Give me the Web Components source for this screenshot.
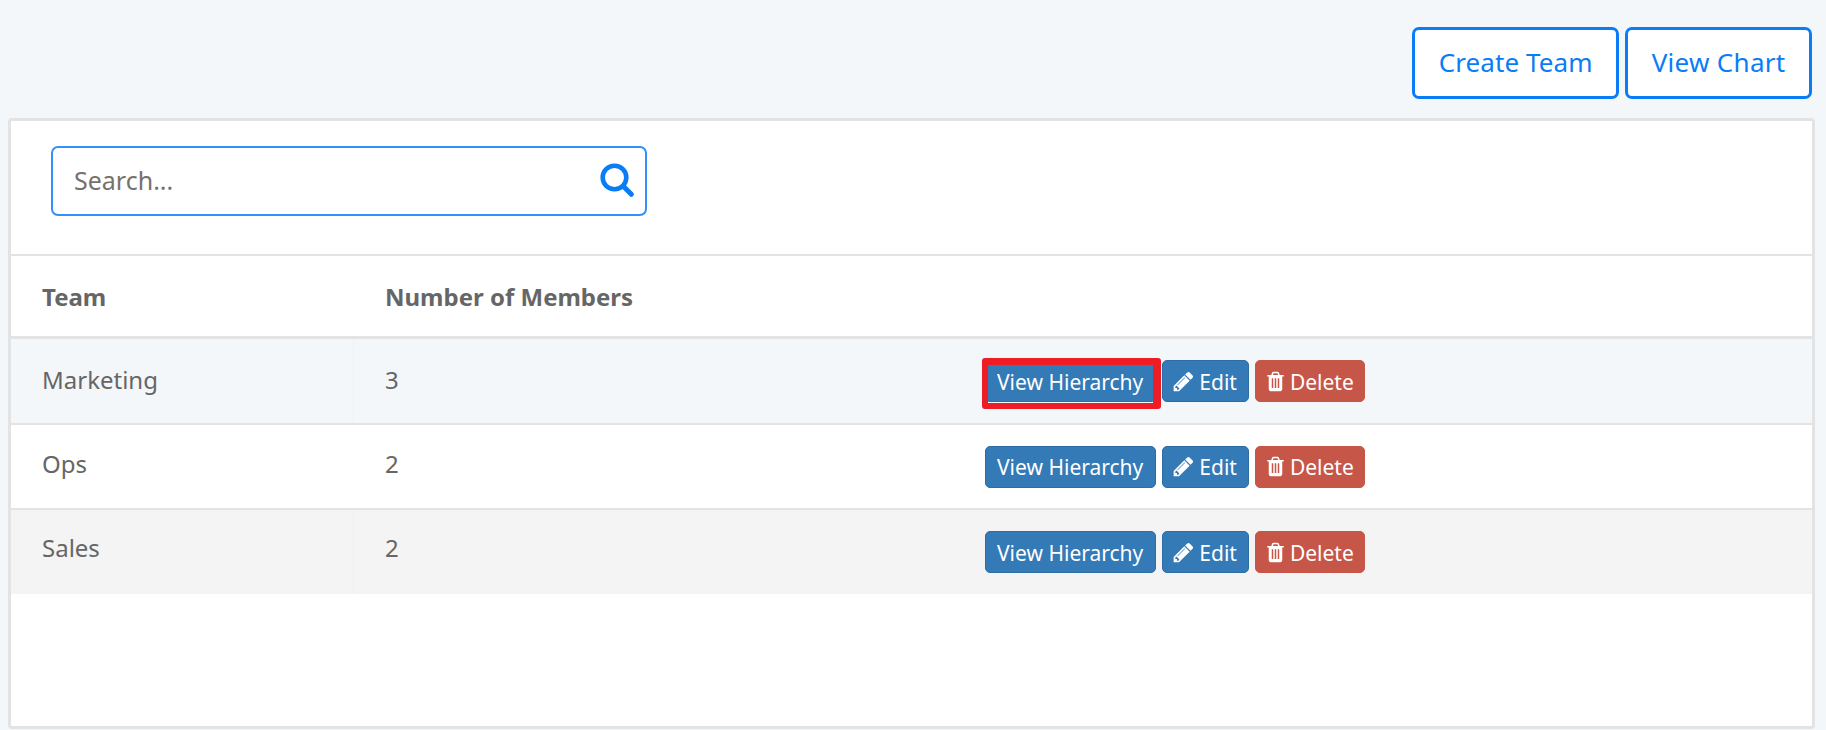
<!DOCTYPE html>
<html lang="en">
<head>
<meta charset="utf-8">
<title>Teams</title>
<style>
  html, body { margin: 0; height: 100%; }
  body { background: #f4f7fa; font-family: "Noto Sans", "Open Sans", sans-serif; color: #666; overflow: hidden; }
</style>
</head>
<body>
<team-page>
  <outline-button slot="actions" style="--track: 0.100px">Create Team</outline-button>
  <outline-button slot="actions" style="--track: 0.300px">View Chart</outline-button>
  <search-box slot="search" placeholder="Search..."></search-box>
  <team-table>
    <team-row team="Marketing" members="3" tone="blue" marked style="--row-height: 86px; --lift: 4px"></team-row>
    <team-row team="Ops" members="2" style="--row-height: 85px; --lift: 7px"></team-row>
    <team-row team="Sales" members="2" tone="grey" style="--row-height: 84px; --lift: 9px"></team-row>
  </team-table>
</team-page>

<script>
'use strict';

const ICONS = {
  pencil: '<svg viewBox="0 0 1792 1792" width="23" height="23" fill="currentColor"><path d="M491 1536l91-91-235-235-91 91v107h128v128h107zm523-928q0-22-22-22-10 0-17 7l-542 542q-7 7-7 17 0 22 22 22 10 0 17-7l542-542q7-7 7-17zm-54-192l416 416-832 832h-416v-416zm683 96q0 53-37 90l-166 166-416-416 166-165q36-38 90-38 53 0 91 38l235 234q37 39 37 91z"/></svg>',
  trash: '<svg viewBox="0 0 1792 1792" width="21" height="23" preserveAspectRatio="none" fill="currentColor"><path d="M704 1376v-704q0-14-9-23t-23-9h-64q-14 0-23 9t-9 23v704q0 14 9 23t23 9h64q14 0 23-9t9-23zm256 0v-704q0-14-9-23t-23-9h-64q-14 0-23 9t-9 23v704q0 14 9 23t23 9h64q14 0 23-9t9-23zm256 0v-704q0-14-9-23t-23-9h-64q-14 0-23 9t-9 23v704q0 14 9 23t23 9h64q14 0 23-9t9-23zm-544-992h448l-48-117q-7-9-17-11h-317q-10 2-17 11zm928 32v64q0 14-9 23t-23 9h-96v948q0 83-47 143.500t-113 60.500h-832q-66 0-113-58.500t-47-141.500v-952h-96q-14 0-23-9t-9-23v-64q0-14 9-23t23-9h309l70-167q15-37 54-63t79-26h320q40 0 79 26t54 63l70 167h309q14 0 23 9t9 23z"/></svg>',
  search: '<svg viewBox="0 0 34 34" width="34" height="34" fill="none" stroke="currentColor"><circle cx="14.500" cy="14.500" r="11.800" stroke-width="4.600"/><path d="M23.500 23.500l7.800 7.800" stroke-width="5" stroke-linecap="round"/></svg>'
};

class TeamPage extends HTMLElement {
  constructor () {
    super();
    this.attachShadow({ mode: 'open' }).innerHTML = `
      <style>
        :host { display: block; height: 730px; padding: 27px 11px 1px 8px; box-sizing: border-box; }
        .actions { display: flex; justify-content: flex-end; gap: 6px; height: 72px; margin-bottom: 19px; margin-right: 3px; }
        .card { height: 611px; box-sizing: border-box; background: #fff; border: 3px solid #e3e3e3; border-radius: 4px; }
        .search { height: 135px; padding: 25px 0 0 40px; box-sizing: border-box; border-bottom: 2px solid #e3e3e3; }
      </style>
      <div class="actions"><slot name="actions"></slot></div>
      <div class="card">
        <div class="search"><slot name="search"></slot></div>
        <slot></slot>
      </div>`;
  }
}

class OutlineButton extends HTMLElement {
  constructor () {
    super();
    this.attachShadow({ mode: 'open' }).innerHTML = `
      <style>
        :host { display: flex; align-items: center; padding: 0 23.500px 2px; background: #fff; border: 3px solid #0a7cf5; border-radius: 7px; color: #0a7cf5; font-size: 26px; letter-spacing: var(--track, 0); }
      </style>
      <slot></slot>`;
  }
}

class SearchBox extends HTMLElement {
  constructor () {
    super();
    this.attachShadow({ mode: 'open' }).innerHTML = `
      <style>
        :host { display: flex; align-items: center; justify-content: space-between; box-sizing: border-box; width: 596px; height: 70px; padding: 0 11px 2px 21px; border: 2px solid #3291f8; border-radius: 7px; }
        .hint { font-size: 25px; color: #76716b; }
        .icon { display: flex; color: #0a7cf5; }
      </style>
      <span class="hint"></span>
      <span class="icon">${ICONS.search}</span>`;
  }

  connectedCallback () {
    this.shadowRoot.querySelector('.hint').textContent = this.getAttribute('placeholder');
  }
}

class TeamTable extends HTMLElement {
  constructor () {
    super();
    this.attachShadow({ mode: 'open' }).innerHTML = `
      <style>
        :host { display: block; }
        .head { display: grid; grid-template-columns: 343px 1fr; align-items: center; height: 83px; box-sizing: border-box; border-bottom: 3px solid #e3e3e3; font-size: 24px; font-weight: 700; color: #666; }
        .head span { padding-left: 31px; }
      </style>
      <div class="head"><span>Team</span><span>Number of Members</span></div>
      <slot></slot>`;
  }
}

class TeamRow extends HTMLElement {
  constructor () {
    super();
    this.attachShadow({ mode: 'open' }).innerHTML = `
      <style>
        :host { display: grid; grid-template-columns: 343px 631px 1fr; align-items: stretch; height: var(--row-height); box-sizing: border-box; border-bottom: 2px solid #e3e3e3; font-size: 24px; color: #666; }
        :host([tone="blue"]) { background: #f4f7fa; }
        :host([tone="grey"]) { background: #f4f4f4; border-bottom: 0; }
        .cell { display: flex; align-items: center; padding-left: 31px; padding-bottom: var(--lift); }
        .team { border-right: 1px solid transparent; }
        :host([tone="blue"]) .team { border-right-color: #f0f3f6; }
        :host([tone="grey"]) .team { border-right-color: #f0f0f0; }
        .actions { display: flex; align-items: center; gap: 6px; position: relative; }
        .mark { position: absolute; left: -3px; top: 19px; width: 179px; height: 51px; box-sizing: border-box; border-style: solid; border-color: #ee1c25; border-width: 7px 8px 6px 6px; border-radius: 3px; }
      </style>
      <div class="cell team"></div>
      <div class="cell members"></div>
      <div class="actions">
        <action-button>View Hierarchy</action-button>
        <action-button icon="pencil">Edit</action-button>
        <action-button icon="trash" tone="danger">Delete</action-button>
      </div>`;
  }

  connectedCallback () {
    this.shadowRoot.querySelector('.team').textContent = this.getAttribute('team');
    this.shadowRoot.querySelector('.members').textContent = this.getAttribute('members');

    if (this.hasAttribute('marked')) {
      const $$mark = document.createElement('div');
      $$mark.className = 'mark';
      this.shadowRoot.querySelector('.actions').appendChild($$mark);
    }
  }
}

class ActionButton extends HTMLElement {
  constructor () {
    super();
    this.attachShadow({ mode: 'open' }).innerHTML = `
      <style>
        :host { display: flex; align-items: center; gap: 4px; height: 42px; box-sizing: border-box; padding: 1px 12px 0 11px; background: #337ab7; border: 1px solid #2e6da4; border-radius: 5px; color: #fff; font-size: 21px; }
        :host([icon]) { padding: 1px 11px 0 9px; }
        :host([tone="danger"]) { padding-right: 10px; background: #c65647; border-color: #c65647; }
        .icon { display: flex; margin-top: -1px; }
        .icon:empty { display: none; }
      </style>
      <span class="icon"></span><slot></slot>`;
  }

  connectedCallback () {
    const icon = this.getAttribute('icon');

    if (icon) {
      this.shadowRoot.querySelector('.icon').innerHTML = ICONS[icon];
    }
  }
}

customElements.define('team-page', TeamPage);
customElements.define('outline-button', OutlineButton);
customElements.define('search-box', SearchBox);
customElements.define('team-table', TeamTable);
customElements.define('team-row', TeamRow);
customElements.define('action-button', ActionButton);
</script>
</body>
</html>
